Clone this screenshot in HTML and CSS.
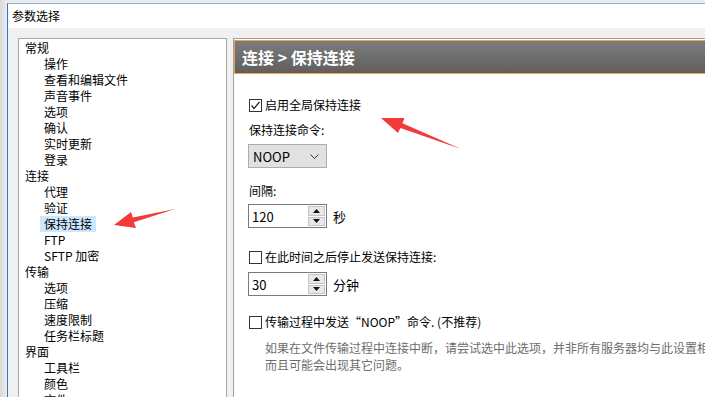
FILE: index.html
```html
<!DOCTYPE html>
<html lang="zh-CN">
<head>
    <meta charset="UTF-8">
    <meta name="viewport" content="width=device-width, initial-scale=1.0">
    <title>参数选择</title>
    <link rel="stylesheet" href="styles.css">
</head>
<body>
    <div class="dialog">
        <div class="titlebar">参数选择</div>
        <div class="dialog-body">
            <ul class="tree">
                <li class="group">常规</li>
                <li class="leaf">操作</li>
                <li class="leaf">查看和编辑文件</li>
                <li class="leaf">声音事件</li>
                <li class="leaf">选项</li>
                <li class="leaf">确认</li>
                <li class="leaf">实时更新</li>
                <li class="leaf">登录</li>
                <li class="group">连接</li>
                <li class="leaf">代理</li>
                <li class="leaf">验证</li>
                <li class="leaf"><span class="selected">保持连接</span></li>
                <li class="leaf">FTP</li>
                <li class="leaf">SFTP 加密</li>
                <li class="group">传输</li>
                <li class="leaf">选项</li>
                <li class="leaf">压缩</li>
                <li class="leaf">速度限制</li>
                <li class="leaf">任务栏标题</li>
                <li class="group">界面</li>
                <li class="leaf">工具栏</li>
                <li class="leaf">颜色</li>
                <li class="leaf">文件</li>
            </ul>
            <div class="panel">
                <div class="panel-head">连接 &gt; 保持连接</div>
                <div class="panel-content">
                    <div class="check-row">
                        <span class="checkbox">
                            <svg width="11" height="11" viewBox="0 0 11 11"><polyline points="1.5,5.5 4,8.5 9.5,2" fill="none" stroke="#222" stroke-width="1.2"/></svg>
                        </span>
                        <span>启用全局保持连接</span>
                    </div>
                    <div class="field-label">保持连接命令:</div>
                    <div class="select">
                        <span>NOOP</span>
                        <svg class="chevron" width="9" height="5" viewBox="0 0 9 5"><polyline points="0.5,0.5 4.5,4.5 8.5,0.5" fill="none" stroke="#333" stroke-width="1"/></svg>
                    </div>
                    <div class="field-label label-gap">间隔:</div>
                    <div class="spin-row">
                        <div class="spin">
                            <span class="spin-value">120</span>
                            <div class="spin-btns">
                                <span class="spin-btn"><svg width="7" height="4" viewBox="0 0 7 4"><polygon points="3.5,0 7,4 0,4" fill="#111"/></svg></span>
                                <span class="spin-btn"><svg width="7" height="4" viewBox="0 0 7 4"><polygon points="0,0 7,0 3.5,4" fill="#111"/></svg></span>
                            </div>
                        </div>
                        <span class="unit">秒</span>
                    </div>
                    <div class="check-row row-gap">
                        <span class="checkbox"></span>
                        <span>在此时间之后停止发送保持连接:</span>
                    </div>
                    <div class="spin-row spin-gap">
                        <div class="spin">
                            <span class="spin-value">30</span>
                            <div class="spin-btns">
                                <span class="spin-btn"><svg width="7" height="4" viewBox="0 0 7 4"><polygon points="3.5,0 7,4 0,4" fill="#111"/></svg></span>
                                <span class="spin-btn"><svg width="7" height="4" viewBox="0 0 7 4"><polygon points="0,0 7,0 3.5,4" fill="#111"/></svg></span>
                            </div>
                        </div>
                        <span class="unit">分钟</span>
                    </div>
                    <div class="check-row noop-gap">
                        <span class="checkbox"></span>
                        <span>传输过程中发送“NOOP”命令. (不推荐)</span>
                    </div>
                    <p class="hint">如果在文件传输过程中连接中断，请尝试选中此选项，并非所有服务器均与此设置相容，<br>而且可能会出现其它问题。</p>
                </div>
            </div>
        </div>
    </div>

    <!-- red annotation arrows -->
    <svg class="annotations" width="705" height="397" viewBox="0 0 705 397">
        <polygon points="381,118 404.5,118 402.4,123.2 461,149 400.4,128 398,133" fill="#f23a3a"/>
        <polygon points="114,225 131,212 132.8,217.4 175,209 133.8,222.2 136,228" fill="#f23a3a"/>
    </svg>
</body>
</html>
```

FILE: styles.css
```css
body {
    margin: 0;
    height: 397px;
    overflow: hidden;
    font-family: "Noto Sans CJK SC", "Noto Sans", sans-serif;
    font-size: 12px;
    color: #000;
    background: linear-gradient(90deg, #d9d9d9, #ececec 7px);
    position: relative;
}
.dialog {
    margin: 3px 0 0 7px;
    width: 760px;
    height: 394px;
    border-left: 1px solid #2a7bd2;
    border-top: 1px solid #8fb3dc;
    background: #f0f0f0;
    display: flex;
    flex-direction: column;
}
.titlebar {
    height: 24px;
    line-height: 24px;
    padding-left: 4px;
    background: #fff;
    flex: none;
}
.dialog-body {
    flex: 1;
    display: flex;
    padding: 10px 0 0 10px;
    gap: 6px;
    min-height: 0;
}
.tree {
    list-style: none;
    margin: 0;
    padding: 1px 0 0 6px;
    width: 201px;
    background: #fff;
    border: 1px solid #a8a8a8;
    border-bottom: none;
    overflow: hidden;
}
.tree li {
    height: 16px;
    line-height: 16px;
    white-space: nowrap;
}
.tree .leaf {
    padding-left: 19px;
}
.tree .selected {
    display: inline-block;
    background: #cce8ff;
    padding: 0 4px;
    margin-left: -4px;
}
.panel {
    flex: 1;
    background: #fff;
    border-left: 1px solid #a0a0a0;
    border-top: 1px solid #a0a0a0;
}
.panel-head {
    margin-top: 1px;
    height: 32px;
    line-height: 32px;
    padding-left: 7px;
    border: 1px solid #f39d45;
    border-right: none;
    background: linear-gradient(#7c7c7c, #5f5f5f);
    color: #fff;
    font-size: 16px;
    font-weight: 700;
}
.panel-content {
    padding: 23px 0 0 15px;
}
.check-row {
    display: flex;
    align-items: center;
    gap: 3px;
    height: 16px;
    line-height: 16px;
    white-space: nowrap;
}
.checkbox {
    width: 11px;
    height: 11px;
    border: 1px solid #333;
    background: #fff;
    display: flex;
    align-items: center;
    justify-content: center;
}
.field-label {
    margin-top: 9px;
    height: 16px;
    line-height: 16px;
}
.label-gap {
    margin-top: 15px;
}
.select {
    margin: 6px 0 0 -1px;
    width: 79px;
    height: 24px;
    box-sizing: border-box;
    border: 1px solid #adadad;
    background: #e1e1e1;
    display: flex;
    align-items: center;
    justify-content: space-between;
    padding: 0 7px 0 4px;
    font-size: 13px;
}
.spin-row {
    margin: 5px 0 0 -1px;
    display: flex;
    align-items: center;
    gap: 6px;
}
.spin {
    width: 79px;
    height: 24px;
    box-sizing: border-box;
    border: 1px solid #7a7a7a;
    background: #fff;
    display: flex;
    align-items: center;
    justify-content: space-between;
    padding: 1px 1px 1px 3px;
}
.spin-value {
    font-size: 13px;
}
.spin-btns {
    display: flex;
    flex-direction: column;
    gap: 1px;
    height: 20px;
}
.spin-btn {
    width: 15px;
    flex: 1;
    background: #e8e8e8;
    border: 1px solid #c4c4c4;
    display: flex;
    align-items: center;
    justify-content: center;
}
.unit {
    font-size: 13px;
}
.row-gap {
    margin-top: 21px;
}
.spin-gap {
    margin-top: 7px;
}
.noop-gap {
    margin-top: 18px;
}
.hint {
    margin: 9px 0 0 16px;
    line-height: 17px;
    color: #6d6d6d;
    white-space: nowrap;
}
.annotations {
    position: absolute;
    left: 0;
    top: 0;
    pointer-events: none;
}
```
